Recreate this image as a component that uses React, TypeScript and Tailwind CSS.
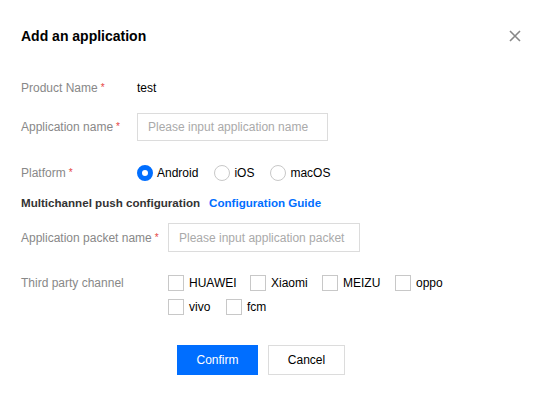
import React from "react";

const Req = () => <span className="ml-[3px] text-[#e54545] text-[10px] relative -top-[1px]">*</span>;

const Radio = ({ label, checked }: { label: string; checked?: boolean }) => (
  <label className="flex items-center gap-[4px]">
    <span
      className={
        checked
          ? "w-[16px] h-[16px] rounded-full border-[5px] border-[#006eff] bg-white"
          : "w-[16px] h-[16px] rounded-full border border-[#c8c8c8] bg-white"
      }
    />
    <span className="text-[12px] text-black">{label}</span>
  </label>
);

const Check = ({ label, className }: { label: string; className?: string }) => (
  <label className={"flex items-center gap-[5px] " + (className ?? "")}>
    <span className="w-[16px] h-[16px] border border-[#c8c8c8] bg-white" />
    <span className="text-[12px] text-black">{label}</span>
  </label>
);

export default function App() {
  return (
    <div className="w-[544px] h-[398px] bg-white px-[21px] font-['Liberation_Sans',Arial,sans-serif] overflow-hidden">
      <div className="mt-[26px] h-[20px] flex items-center justify-between">
        <h1 className="text-[14px] font-bold text-black">Add an application</h1>
        <svg width="12" height="12" viewBox="0 0 12 12" className="mr-[2px] -mt-[1px]">
          <path d="M1 1L11 11M11 1L1 11" stroke="#888" strokeWidth="1.6" />
        </svg>
      </div>

      <div className="mt-[32px] h-[20px] flex items-center text-[12px]">
        <span className="w-[116px] text-[#888]">
          Product Name
          <Req />
        </span>
        <span className="text-black">test</span>
      </div>

      <div className="mt-[15px] h-[28px] flex items-center text-[12px]">
        <span className="w-[116px] text-[#888]">
          Application name
          <Req />
        </span>
        <div className="w-[191px] h-[28px] border border-[#dcdcdc] flex items-center px-[10px] text-[#aaa]">
          Please input application name
        </div>
      </div>

      <div className="mt-[22px] h-[20px] flex items-center text-[12px]">
        <span className="w-[116px] text-[#888]">
          Platform
          <Req />
        </span>
        <div className="flex items-center gap-[16px]">
          <Radio label="Android" checked />
          <Radio label="iOS" />
          <Radio label="macOS" />
        </div>
      </div>

      <div className="mt-[10px] h-[20px] flex items-center text-[11.6px] font-bold">
        <span className="text-[#333]">Multichannel push configuration</span>
        <span className="ml-[9px] text-[#006eff]">Configuration Guide</span>
      </div>

      <div className="mt-[10px] h-[29px] flex items-center text-[12px]">
        <span className="w-[147px] text-[#888]">
          Application packet name
          <Req />
        </span>
        <div className="w-[192px] h-[29px] border border-[#dcdcdc] flex items-center px-[10px] text-[#aaa]">
          Please input application packet
        </div>
      </div>

      <div className="mt-[23px] flex text-[12px]">
        <span className="w-[147px] h-[16px] flex items-center text-[#888]">Third party channel</span>
        <div className="flex flex-col gap-[8px]">
          <div className="flex items-center h-[16px]">
            <Check label="HUAWEI" className="w-[82px]" />
            <Check label="Xiaomi" className="w-[72px]" />
            <Check label="MEIZU" className="w-[73px]" />
            <Check label="oppo" />
          </div>
          <div className="flex items-center h-[16px]">
            <Check label="vivo" className="w-[58px]" />
            <Check label="fcm" />
          </div>
        </div>
      </div>

      <div className="mt-[30px] flex gap-[10px] pl-[156px] text-[12px]">
        <button className="w-[81px] h-[30px] bg-[#006eff] text-white">Confirm</button>
        <button className="w-[77px] h-[30px] border border-[#dcdcdc] bg-white text-black">Cancel</button>
      </div>
    </div>
  );
}
